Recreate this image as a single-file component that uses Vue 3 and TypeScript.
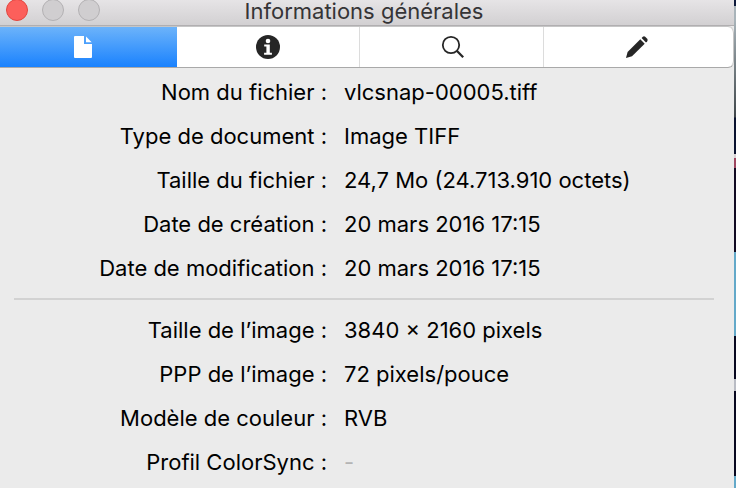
<script setup lang="ts">
import { ref } from 'vue'

interface Row {
  label: string
  value: string
  muted?: boolean
}

const tabs = ['Informations générales', 'Plus d’informations', 'Mots-clés', 'Annotations']
const active = ref(0)

const groups: Row[][] = [
  [
    { label: 'Nom du fichier :', value: 'vlcsnap-00005.tiff' },
    { label: 'Type de document :', value: 'Image TIFF' },
    { label: 'Taille du fichier :', value: '24,7 Mo (24.713.910 octets)' },
    { label: 'Date de création :', value: '20 mars 2016 17:15' },
    { label: 'Date de modification :', value: '20 mars 2016 17:15' },
  ],
  [
    { label: 'Taille de l’image :', value: '3840 × 2160 pixels' },
    { label: 'PPP de l’image :', value: '72 pixels/pouce' },
    { label: 'Modèle de couleur :', value: 'RVB' },
    { label: 'Profil ColorSync :', value: '-', muted: true },
  ],
]
</script>

<template>
  <div class="desktop">
    <main class="window">
      <header class="titlebar">
        <div class="lights">
          <button class="light close" type="button" aria-label="Fermer"></button>
          <button class="light" type="button" aria-label="Réduire"></button>
          <button class="light" type="button" aria-label="Agrandir"></button>
        </div>
        <h1>Informations générales</h1>
      </header>

      <nav class="tabs">
        <button
          v-for="(tab, i) in tabs"
          :key="tab"
          class="tab"
          :class="{ active: active === i }"
          type="button"
          :aria-label="tab"
          :aria-pressed="active === i"
          @click="active = i"
        >
          <svg v-if="i === 0" width="24" height="24" viewBox="0 0 24 24">
            <path fill="currentColor" d="M4 1h9v8h8v13a1 1 0 0 1-1 1H4a1 1 0 0 1-1-1V2a1 1 0 0 1 1-1z" />
            <path fill="currentColor" d="M15 1.5l5.7 5.7H15z" />
          </svg>
          <svg v-else-if="i === 1" width="24" height="24" viewBox="0 0 24 24">
            <circle cx="12" cy="12" r="12" fill="currentColor" />
            <circle cx="12" cy="6" r="2.3" fill="#fff" />
            <path fill="#fff" d="M8.2 9.6h5.6v8.2h2.1v1.9H8.1v-1.9h2.3v-6.3H8.2z" />
          </svg>
          <svg v-else-if="i === 2" width="24" height="24" viewBox="0 0 24 24" fill="none" stroke="currentColor">
            <circle cx="11" cy="10" r="8.2" stroke-width="1.8" />
            <path d="M17 16l6.2 6.3" stroke-width="2.3" />
          </svg>
          <svg v-else width="24" height="24" viewBox="0 0 24 24">
            <path fill="currentColor" d="M1 23l1.6-6L15.3 4.3l4.4 4.4L7 21.3z" />
            <path fill="currentColor" d="M16.6 3l1.2-1.2q1.2-1 2.4 0l2 2q1 1.2 0 2.4L21 7.4z" />
          </svg>
        </button>
      </nav>

      <section class="content">
        <dl v-for="(rows, g) in groups" :key="g">
          <div v-for="row in rows" :key="row.label" class="row">
            <dt>{{ row.label }}</dt>
            <dd :class="{ muted: row.muted }">{{ row.value }}</dd>
          </div>
        </dl>
      </section>
    </main>
  </div>
</template>

<style>
body {
  margin: 0;
}
</style>

<style scoped>
.desktop {
  box-sizing: border-box;
  min-height: 100vh;
  padding-right: 2px;
  display: flex;
  font-family: Inter, "Liberation Sans", sans-serif;
  background: linear-gradient(
    #0d1a3c 0 6px,
    #a9b4ba 6px 20px,
    #7c868b 60px,
    #3f464a 117px,
    #0a1230 118px 154px,
    #d9d2d5 154px 158px,
    #9e4660 158px 168px,
    #110a22 168px 252px,
    #63a9c9 252px 336px,
    #080820 336px 379px,
    #b9bcc4 379px 391px,
    #080820 391px 476px,
    #63a9c9 476px
  );
}

.window {
  flex: 1;
  overflow: hidden;
  background: #ebebeb;
}

.titlebar {
  display: grid;
  grid-template-columns: 1fr auto 1fr;
  height: 25px;
  border-bottom: 1px solid #b1afb1;
  background: linear-gradient(#e6e4e6, #d2d0d2);
}

.lights {
  display: flex;
  gap: 14px;
  padding-left: 6px;
  margin-top: -1px;
}

.light {
  box-sizing: border-box;
  width: 22px;
  height: 22px;
  padding: 0;
  border: 1px solid #b3b1b3;
  border-radius: 50%;
  background: #d0ced0;
}

.close {
  border-color: #e2463f;
  background: #fc5f5b;
}

h1 {
  margin: 0;
  padding-right: 6px;
  font-size: 22px;
  font-weight: 400;
  line-height: 22px;
  color: #353436;
}

.tabs {
  display: grid;
  grid-template-columns: 188fr 183fr 184fr 190fr;
  height: 40px;
  margin-left: -11px;
  border-top: 1px solid #c6c6c6;
  border-bottom: 1px solid #a9a9a9;
  border-radius: 0 6px 6px 0;
  background: #fff;
}

.tab {
  display: flex;
  align-items: center;
  justify-content: center;
  padding: 0;
  border: 0;
  border-right: 1px solid #dcdcdc;
  color: #262626;
  background: transparent;
}

.tab:last-child {
  padding-right: 4px;
  border-right-color: #c6c6c6;
  border-radius: 0 6px 6px 0;
}

.tab.active {
  border-right: 0;
  color: #fff;
  background: linear-gradient(#6cb3fa, #1a82fe);
}

.content {
  padding: 2px 20px 0 14px;
}

dl {
  margin: 0;
}

dl + dl {
  margin-top: 8px;
  padding-top: 8px;
  border-top: 2px solid #d2d2d2;
}

.row {
  display: grid;
  grid-template-columns: 313fr 370fr;
  column-gap: 17px;
  font-size: 22px;
  line-height: 44px;
  color: #000;
}

dt {
  text-align: right;
}

dd {
  margin: 0;
}

.muted {
  color: #b4b4b4;
}
</style>
